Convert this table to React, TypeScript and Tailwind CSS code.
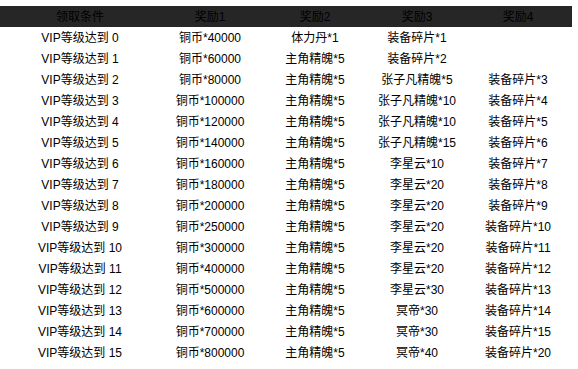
import React from 'react';

const rows: string[][] = [
    ['VIP等级达到 0', '铜币*40000', '体力丹*1', '装备碎片*1', ''],
    ['VIP等级达到 1', '铜币*60000', '主角精魄*5', '装备碎片*2', ''],
    ['VIP等级达到 2', '铜币*80000', '主角精魄*5', '张子凡精魄*5', '装备碎片*3'],
    ['VIP等级达到 3', '铜币*100000', '主角精魄*5', '张子凡精魄*10', '装备碎片*4'],
    ['VIP等级达到 4', '铜币*120000', '主角精魄*5', '张子凡精魄*10', '装备碎片*5'],
    ['VIP等级达到 5', '铜币*140000', '主角精魄*5', '张子凡精魄*15', '装备碎片*6'],
    ['VIP等级达到 6', '铜币*160000', '主角精魄*5', '李星云*10', '装备碎片*7'],
    ['VIP等级达到 7', '铜币*180000', '主角精魄*5', '李星云*20', '装备碎片*8'],
    ['VIP等级达到 8', '铜币*200000', '主角精魄*5', '李星云*20', '装备碎片*9'],
    ['VIP等级达到 9', '铜币*250000', '主角精魄*5', '李星云*20', '装备碎片*10'],
    ['VIP等级达到 10', '铜币*300000', '主角精魄*5', '李星云*20', '装备碎片*11'],
    ['VIP等级达到 11', '铜币*400000', '主角精魄*5', '李星云*20', '装备碎片*12'],
    ['VIP等级达到 12', '铜币*500000', '主角精魄*5', '李星云*30', '装备碎片*13'],
    ['VIP等级达到 13', '铜币*600000', '主角精魄*5', '冥帝*30', '装备碎片*14'],
    ['VIP等级达到 14', '铜币*700000', '主角精魄*5', '冥帝*30', '装备碎片*15'],
    ['VIP等级达到 15', '铜币*800000', '主角精魄*5', '冥帝*40', '装备碎片*20'],
];

const headers = ['领取条件', '奖励1', '奖励2', '奖励3', '奖励4'];
const widths = ['w-[160px]', 'w-[100px]', 'w-[110px]', 'w-[94px]', 'w-[108px]'];

export default function App() {
    return (
        <div className="w-[578px] h-[369px] bg-white pt-[6px] text-[12px] text-black font-['Liberation_Sans','Noto_Sans_CJK_SC',sans-serif]">
            <div className="w-[572px]">
                {/* header */}
                <div className="flex h-[21px] bg-[#262626] items-center">
                    {headers.map((h, i) => (
                        <div key={h} className={`${widths[i]} text-center text-black`}>{h}</div>
                    ))}
                </div>
                {rows.map((r, ri) => (
                    <div key={ri} className="flex h-[21px] items-center">
                        {r.map((c, ci) => (
                            <div key={ci} className={`${widths[ci]} text-center`}>{c}</div>
                        ))}
                    </div>
                ))}
            </div>
        </div>
    );
}
